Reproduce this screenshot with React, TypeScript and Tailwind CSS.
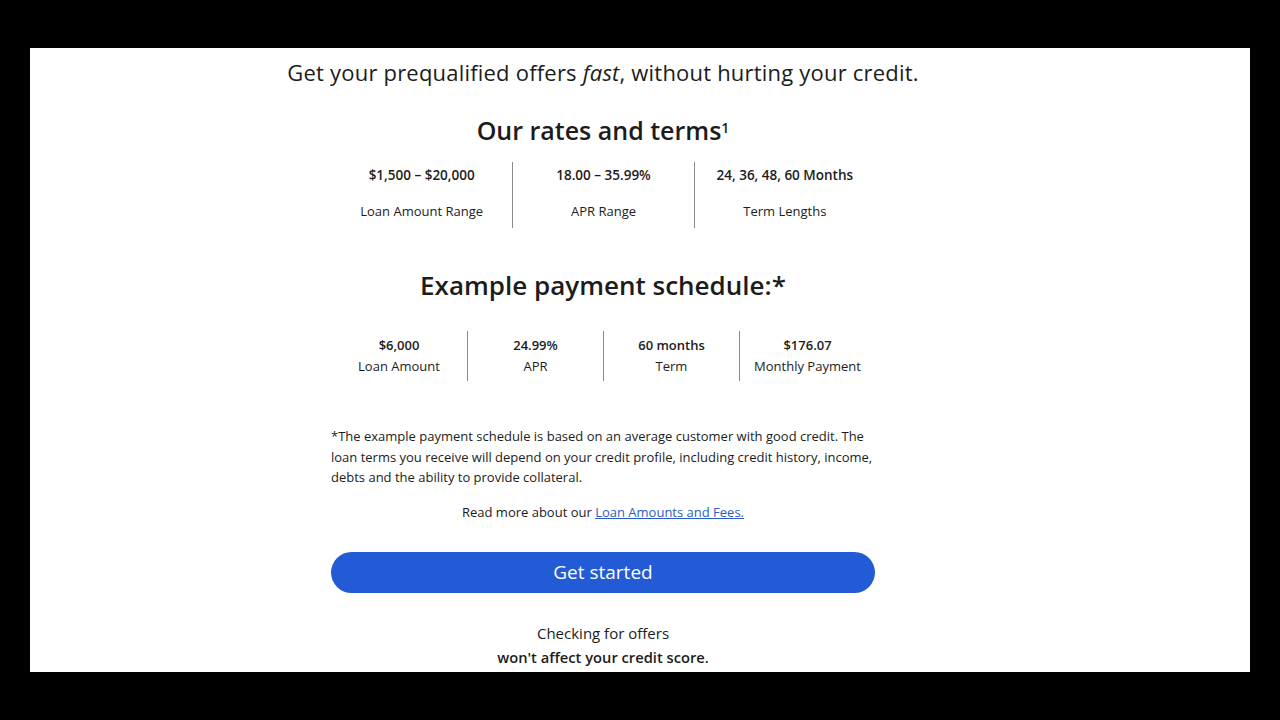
export default function App() {
  const rates = [
    { value: '$1,500 – $20,000', label: 'Loan Amount Range' },
    { value: '18.00 – 35.99%', label: 'APR Range' },
    { value: '24, 36, 48, 60 Months', label: 'Term Lengths' },
  ]
  const example = [
    { value: '$6,000', label: 'Loan Amount' },
    { value: '24.99%', label: 'APR' },
    { value: '60 months', label: 'Term' },
    { value: '$176.07', label: 'Monthly Payment' },
  ]

  return (
    <div className="h-[720px] bg-black pt-[48px] font-['Open_Sans',sans-serif] text-[#1c1c1c]">
      <div className="mx-[30px] h-[624px] overflow-hidden bg-white">
        <div className="ml-[301px] flex w-[544px] flex-col items-center">
          {/* tagline */}
          <p className="mt-[10px] whitespace-nowrap text-[22px] leading-[28px] tracking-[0.2px]">
            Get your prequalified offers <em>fast</em>, without hurting your credit.
          </p>

          {/* rates */}
          <h2 className="mt-[29px] text-[25px] font-semibold leading-[30px]">
            Our rates and terms<sup className="text-[14px]">1</sup>
          </h2>
          <div className="mt-[17px] grid w-full grid-cols-3">
            {rates.map((r, i) => (
              <div
                key={r.label}
                className={`flex h-[66px] flex-col items-center pt-[3px] text-[13px] ${i > 0 ? 'border-l border-[#8a8a8a]' : ''}`}
              >
                <span className="text-[13.5px] font-semibold leading-[20px]">{r.value}</span>
                <span className="mt-[16px] leading-[20px]">{r.label}</span>
              </div>
            ))}
          </div>

          {/* example schedule */}
          <h2 className="mt-[41px] text-[26px] font-semibold leading-[32px]">Example payment schedule:*</h2>
          <div className="mt-[30px] grid w-full grid-cols-4">
            {example.map((r, i) => (
              <div
                key={r.label}
                className={`flex h-[50px] flex-col items-center pt-[4px] text-[13px] ${i > 0 ? 'border-l border-[#8a8a8a]' : ''}`}
              >
                <span className="font-semibold leading-[20px]">{r.value}</span>
                <span className="mt-[1px] leading-[20px]">{r.label}</span>
              </div>
            ))}
          </div>

          <p className="mt-[45px] w-full text-[13px] leading-[20.5px]">
            *The example payment schedule is based on an average customer with good credit. The loan terms you
            receive will depend on your credit profile, including credit history, income, debts and the ability to
            provide collateral.
          </p>

          <p className="mt-[14px] text-[13px] leading-[20px]">
            Read more about our{' '}
            <a href="#" className="text-[#2a5cc8] underline">
              Loan Amounts and Fees.
            </a>
          </p>

          <button className="mt-[30px] h-[41px] w-full rounded-full bg-[#235ad6] text-[19px] text-white">
            Get started
          </button>

          <p className="mt-[28px] text-[15px] leading-[24px]">Checking for offers</p>
          <p className="text-[14.7px] font-semibold leading-[24px]">won't affect your credit score.</p>
        </div>
      </div>
    </div>
  )
}
